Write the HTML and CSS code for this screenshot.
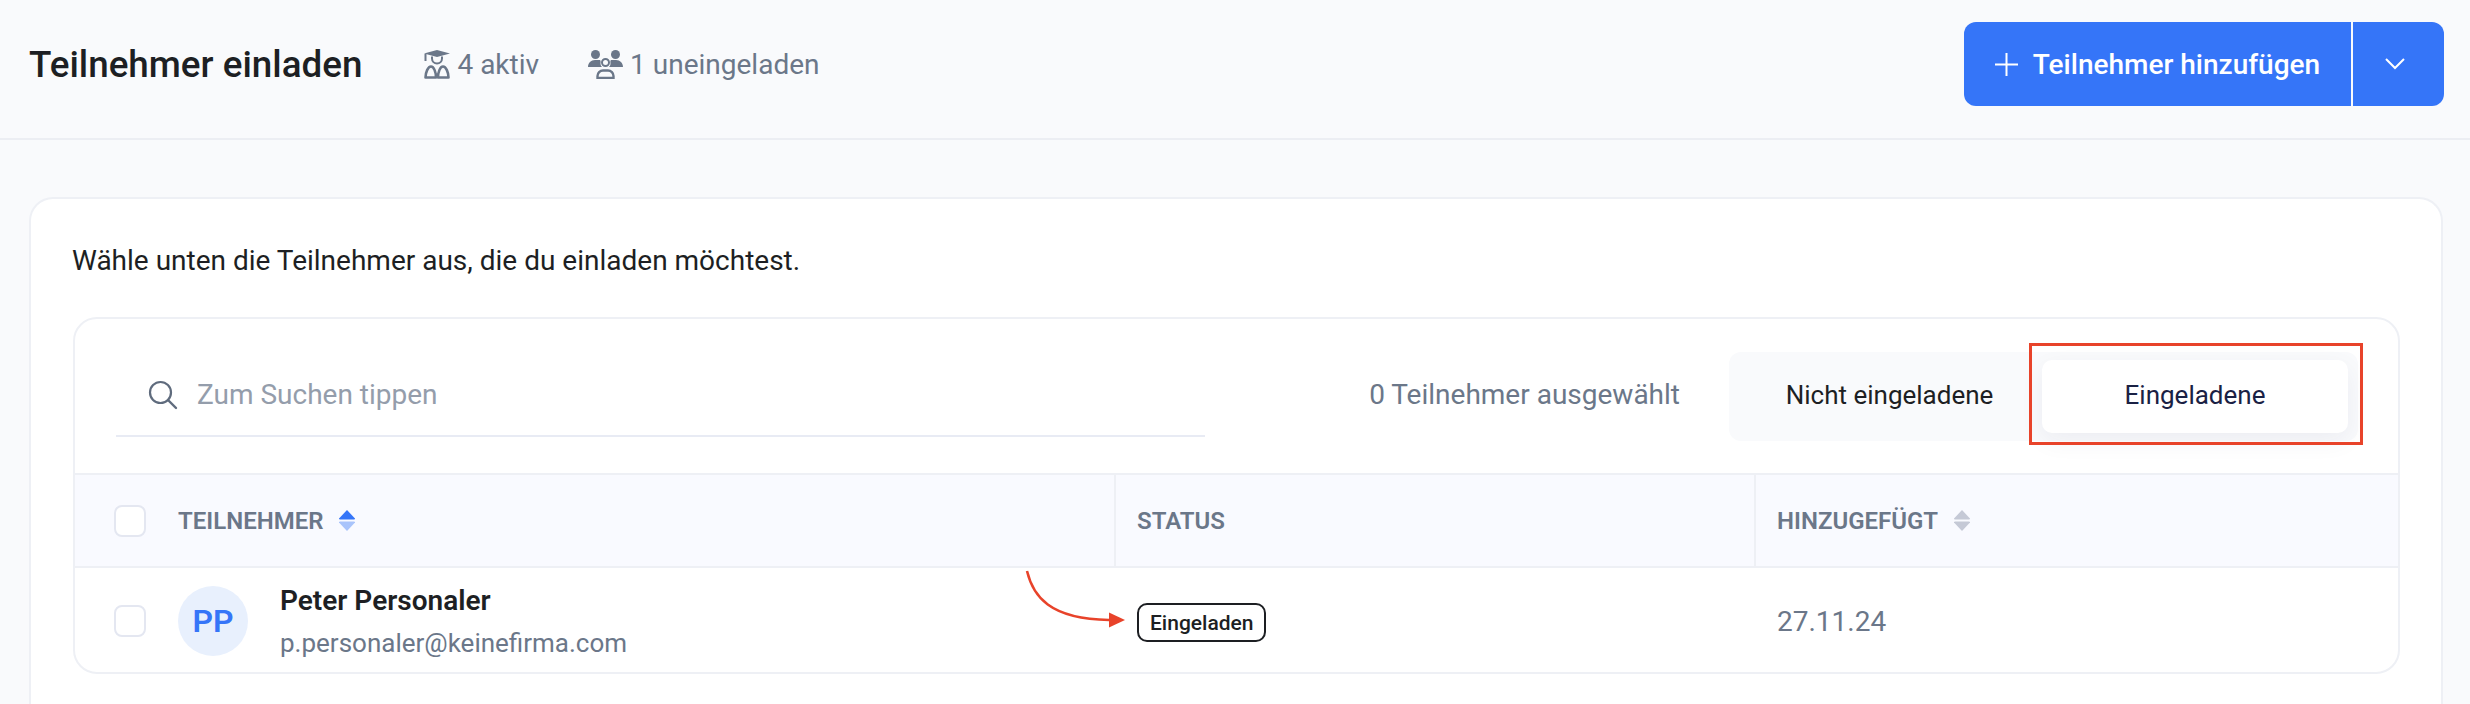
FILE: index.html
```html
<!DOCTYPE html>
<html lang="en">
<head>
    <meta charset="UTF-8">
    <title>Teilnehmer einladen</title>
    <link rel="stylesheet" href="styles.css">
</head>
<body>
    <header class="topbar">
        <h1>Teilnehmer einladen</h1>
        <div class="stat stat-first">
            <svg class="stat-icon" width="26" height="29" viewBox="0 0 26 29">
                <path d="M0 3.500 13 0l13 3.500-13 3.500z" fill="#6b7789"/>
                <path d="M1.500 4v7" stroke="#6b7789" stroke-width="2" fill="none"/>
                <path d="M8 6.500v2a5 5 0 0 0 10 0v-2" stroke="#6b7789" stroke-width="2" fill="none"/>
                <path d="M1.500 27.500c0-5 2.500-11 5.500-11s5 6 5 11zm23 0c0-5-2.500-11-5.500-11s-5 6-5 11z" fill="none" stroke="#6b7789" stroke-width="2.600" stroke-linejoin="round"/>
            </svg>
            <span>4 aktiv</span>
        </div>
        <div class="stat">
            <svg class="stat-icon" width="35" height="29" viewBox="0 0 35 29">
                <circle cx="7.500" cy="4.500" r="4.500" fill="#6b7789"/>
                <circle cx="27.500" cy="4.500" r="4.500" fill="#6b7789"/>
                <path d="M0 17c0-4 3-7 7-7h5c1 1 .5 2 .5 3.500 0 1.500.5 2.500 1.500 3.500z" fill="#6b7789"/>
                <path d="M35 17c0-4-3-7-7-7h-5c-1 1-.5 2-.5 3.500 0 1.500-.5 2.500-1.500 3.500z" fill="#6b7789"/>
                <circle cx="17.500" cy="12.500" r="3.500" fill="none" stroke="#6b7789" stroke-width="2"/>
                <path d="M9.500 28v-2a5.500 5.500 0 0 1 5.500-5.500h5a5.500 5.500 0 0 1 5.500 5.500v2z" fill="none" stroke="#6b7789" stroke-width="2.400"/>
            </svg>
            <span>1 uneingeladen</span>
        </div>
        <div class="add-group">
            <button class="add-btn" type="button">
                <svg width="23" height="23" viewBox="0 0 23 23"><path d="M11.500 0v23M0 11.500h23" stroke="#fff" stroke-width="2" fill="none"/></svg>
                Teilnehmer hinzufügen
            </button>
            <button class="add-more" type="button">
                <svg width="20" height="12" viewBox="0 0 20 12"><path d="M1 1l9 9 9-9" stroke="#fff" stroke-width="2" fill="none"/></svg>
            </button>
        </div>
    </header>

    <main class="content">
        <section class="card">
            <p class="intro">Wähle unten die Teilnehmer aus, die du einladen möchtest.</p>

            <div class="table-box">
                <div class="toolbar">
                    <div class="search">
                        <svg width="30" height="30" viewBox="0 0 30 30"><circle cx="12.500" cy="12.500" r="10.500" stroke="#5f6b7d" stroke-width="2.200" fill="none"/><path d="M20 20l8 8" stroke="#5f6b7d" stroke-width="2.400" stroke-linecap="round"/></svg>
                        <span class="placeholder">Zum Suchen tippen</span>
                    </div>
                    <span class="selected-count">0 Teilnehmer ausgewählt</span>
                    <div class="tabs">
                        <div class="tab">Nicht eingeladene</div>
                        <div class="tab tab-active">Eingeladene</div>
                    </div>
                </div>

                <div class="grid-row head-row">
                    <div class="cell cell-first">
                        <span class="checkbox"></span>
                        <span class="col-title">Teilnehmer</span>
                        <svg class="sort" width="16" height="21" viewBox="0 0 16 21"><path d="M8 0l8 8.500q.3 1-1 1H1q-1.300 0-1-1z" fill="#3575f8"/><path d="M8 21l8-8.500q.3-1-1-1H1q-1.300 0-1 1z" fill="#a9c4fb"/></svg>
                    </div>
                    <div class="cell cell-line"><span class="col-title">Status</span></div>
                    <div class="cell cell-last">
                        <span class="col-title">Hinzugefügt</span>
                        <svg class="sort" width="16" height="21" viewBox="0 0 16 21"><path d="M8 0l8 8.500q.3 1-1 1H1q-1.300 0-1-1z" fill="#c5c9d6"/><path d="M8 21l8-8.500q.3-1-1-1H1q-1.300 0-1 1z" fill="#c5c9d6"/></svg>
                    </div>
                </div>

                <div class="grid-row body-row">
                    <div class="cell cell-first">
                        <span class="checkbox"></span>
                        <span class="avatar">PP</span>
                        <div class="person">
                            <div class="person-name">Peter Personaler</div>
                            <div class="person-mail">p.personaler@keinefirma.com</div>
                        </div>
                    </div>
                    <div class="cell cell-status"><span class="badge">Eingeladen</span></div>
                    <div class="cell cell-last date">27.11.24</div>
                </div>
            </div>
        </section>
    </main>

    <!-- red annotations laid over the screenshot -->
    <div class="mark-box"></div>
    <svg class="mark-arrow" width="102" height="62" viewBox="0 0 102 62">
        <path d="M2 1C8 26 24 49 84 50" stroke="#e8432a" stroke-width="2.500" fill="none"/>
        <path d="M84 42.500l16 7.500-16 7.500z" fill="#e8432a"/>
    </svg>
</body>
</html>
```

FILE: styles.css
```css
* {
    box-sizing: border-box;
}

html, body {
    height: 100%;
}

body {
    margin: 0;
    overflow: hidden;
    background-color: #f9fafc;
    color: #1d1f23;
    font-family: Roboto, "Liberation Sans", sans-serif;
}

.topbar {
    display: flex;
    align-items: center;
    height: 140px;
    padding: 22px 26px 32px 29px;
    border-bottom: 2px solid #eceef3;
}

h1 {
    margin: 0;
    font-size: 36.800px;
    font-weight: 500;
}

.stat {
    display: flex;
    align-items: center;
    gap: 7px;
    margin-left: 49px;
    color: #6b7789;
    font-size: 28px;
}

.stat-first {
    margin-left: 62px;
}

.add-group {
    display: flex;
    margin-left: auto;
    height: 84px;
}

.add-group button {
    display: flex;
    align-items: center;
    justify-content: center;
    border: none;
    background-color: #3575f8;
    color: #fff;
    font-family: inherit;
    font-size: 28px;
    font-weight: 500;
}

.add-btn {
    gap: 15px;
    width: 387px;
    border-radius: 12px 0 0 12px;
}

.add-more {
    width: 91px;
    margin-left: 2px;
    padding: 0 8px 0 0;
    border-radius: 0 12px 12px 0;
}

.content {
    padding: 57px 27px 0 29px;
}

/* the card is cut off by the bottom of the window */
.card {
    height: 507px;
    padding: 42px 41px 0 42px;
    background-color: #fff;
    border: 2px solid #eef0f5;
    border-bottom: none;
    border-radius: 24px 24px 0 0;
}

.intro {
    margin: 0 0 36px -1px;
    font-size: 28px;
    line-height: 40px;
}

.table-box {
    border: 2px solid #eef0f5;
    border-radius: 24px;
}

.toolbar {
    display: flex;
    align-items: center;
    height: 154px;
    padding: 0 40px 0 41px;
}

.search {
    display: flex;
    align-items: center;
    gap: 19px;
    width: 1089px;
    height: 85px;
    margin-bottom: 3px;
    padding: 2px 0 0 32px;
    border-bottom: 2px solid #e8ebf4;
}

.placeholder {
    color: #949dab;
    font-size: 28px;
}

.selected-count {
    margin-left: auto;
    margin-right: 49px;
    margin-bottom: 3px;
    color: #6b7789;
    font-size: 28px;
}

.tabs {
    display: flex;
    padding: 8px 10px 8px 8px;
    background-color: #f9fafc;
    border-radius: 12px;
}

.tab {
    display: flex;
    align-items: center;
    justify-content: center;
    width: 305px;
    height: 73px;
    padding-bottom: 2px;
    font-size: 26px;
    border-radius: 10px;
}

.tab-active {
    width: 306px;
    background-color: #fff;
    color: #1a2144;
    box-shadow: 0 8px 24px rgba(30, 40, 80, 0.06);
}

.grid-row {
    display: grid;
    grid-template-columns: 1041px 640px 1fr;
}

.cell {
    display: flex;
    align-items: center;
}

.head-row {
    height: 95px;
    background-color: #f9faff;
    border-top: 2px solid #eef0f5;
    border-bottom: 2px solid #eef0f5;
}

.body-row {
    height: 104px;
    padding-top: 2px;
}

.cell-first {
    padding-left: 39px;
}

.head-row .cell-first {
    border-right: 2px solid #eef0f5;
}

.cell-line {
    padding-left: 21px;
    border-right: 2px solid #eef0f5;
}

.cell-status {
    padding-left: 21px;
}

.cell-last {
    padding-left: 21px;
}

.checkbox {
    width: 32px;
    height: 32px;
    margin-right: 32px;
    background-color: #fff;
    border: 2px solid #e4e7f1;
    border-radius: 8px;
}

.col-title {
    color: #6b7789;
    font-size: 24px;
    font-weight: 600;
    text-transform: uppercase;
}

.sort {
    margin-left: 16px;
}

.avatar {
    display: flex;
    align-items: center;
    justify-content: center;
    width: 70px;
    height: 70px;
    margin-right: 32px;
    background-color: #e8f0fd;
    border-radius: 50%;
    color: #3575f8;
    font-size: 32px;
    font-weight: 600;
}

.person {
    padding-top: 2px;
}

.person-name {
    font-size: 28px;
    font-weight: 600;
    line-height: 36px;
}

.person-mail {
    margin-top: 6px;
    color: #6b7789;
    font-size: 26px;
    line-height: 36px;
}

.badge {
    display: flex;
    align-items: center;
    height: 39px;
    margin-top: 3px;
    padding: 0 10px 0 11px;
    background-color: #fff;
    border: 2px solid #1d1f23;
    border-radius: 10px;
    font-size: 21px;
    font-weight: 500;
}

.date {
    color: #6b7789;
    font-size: 28px;
}

.mark-box {
    position: absolute;
    left: 2029px;
    top: 343px;
    width: 334px;
    height: 102px;
    border: 3px solid #e8432a;
}

.mark-arrow {
    position: absolute;
    left: 1025px;
    top: 570px;
}
```
